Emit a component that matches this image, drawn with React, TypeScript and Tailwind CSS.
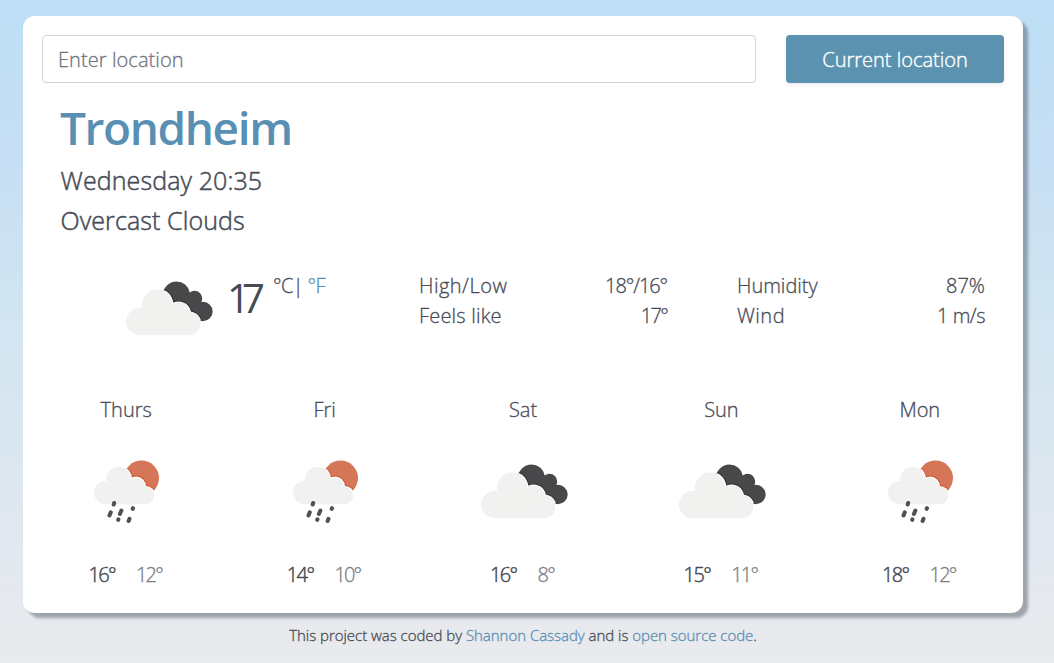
import React from "react";

function Clouds() {
  return (
    <svg viewBox="0 0 100 100" className="block size-[100px]">
      <defs>
        <clipPath id="rear-cloud">
          <circle cx="56.500" cy="38" r="13.500" />
          <circle cx="74.500" cy="41.500" r="7.700" />
          <circle cx="83" cy="54.500" r="9.700" />
          <path d="M50 38L69 35L78 42L84 62L60 60Z" />
        </clipPath>
      </defs>
      <g clipPath="url(#rear-cloud)">
        <path fill="#48484a" d="M30 20H100V75H30Z" />
        <g fill="#2f2f31">
          <circle cx="37" cy="48" r="17.500" />
          <circle cx="58.500" cy="57" r="13.600" />
          <circle cx="69" cy="67" r="13.600" />
        </g>
        <g fill="#fff">
          <circle cx="37" cy="48" r="16.500" />
          <circle cx="58.500" cy="57" r="12.600" />
          <circle cx="69" cy="67" r="12.600" />
        </g>
      </g>
      <g fill="#f1f1f0">
        <circle cx="37" cy="47.500" r="15" />
        <circle cx="19.500" cy="64.500" r="13.500" />
        <circle cx="58.500" cy="57" r="11.500" />
        <circle cx="69" cy="66.500" r="11.500" />
        <path d="M19 52L37 40L59 50L69 67V78H19Z" />
      </g>
    </svg>
  );
}

function SunRain() {
  return (
    <svg viewBox="0 0 100 100" className="block size-[100px]">
      <defs>
        <clipPath id="sun-disc"><circle cx="65.500" cy="42" r="17.500" /></clipPath>
      </defs>
      <g clipPath="url(#sun-disc)">
        <path fill="#d47657" d="M40 20H90V65H40Z" />
        <g fill="#cf5a38">
          <circle cx="42" cy="43" r="14.800" />
          <circle cx="60" cy="50.500" r="11" />
          <circle cx="69.500" cy="60.500" r="11.500" />
        </g>
        <g fill="#fff">
          <circle cx="42" cy="43" r="13.900" />
          <circle cx="60" cy="50.500" r="10" />
          <circle cx="69.500" cy="60.500" r="10.500" />
        </g>
      </g>
      <g fill="#f1f1f1">
        <circle cx="42.500" cy="43" r="12.300" />
        <circle cx="29.500" cy="56.500" r="11.500" />
        <circle cx="60" cy="50.500" r="8.500" />
        <circle cx="69.500" cy="59.500" r="8.700" />
        <path d="M29 46L42 38L60 44L69.500 59V68.200H29Z" />
      </g>
      <g stroke="#505052" strokeWidth="4" strokeLinecap="round">
        <path d="M38.200 67L37.700 68.500M34.800 76.300L33.500 79.500M45.400 74.500L43.900 78M57 72.200L56.700 72.800M42.400 83.400L42.200 83.800M53.500 82.800L52.600 85" />
      </g>
    </svg>
  );
}

const days = [
  { name: "Thurs", high: "16°", low: "12°", rain: true },
  { name: "Fri", high: "14°", low: "10°", rain: true },
  { name: "Sat", high: "16°", low: "8°", rain: false },
  { name: "Sun", high: "15°", low: "11°", rain: false },
  { name: "Mon", high: "18°", low: "12°", rain: true },
];

export default function App() {
  return (
    <div className="h-[663px] overflow-hidden bg-[linear-gradient(to_bottom,#bddff6_0%,#c7dff4_25%,#cfe4f1_43%,#d9e7f0_65%,#e3e8f0_84%,#e9eaec_100%)] px-[23px] pt-4 font-['Open_Sans','Noto_Sans',sans-serif] text-xl font-light leading-[30px] text-[#464b56] [-webkit-text-stroke:0.3px]">
      <main className="h-[597px] w-[1000px] rounded-[12px] bg-white pt-[19px] shadow-[5px_5px_3px_rgba(60,70,80,0.42)]">
        <form className="flex gap-[30px] pl-[19px]" onSubmit={(e) => e.preventDefault()}>
          <input className="h-12 w-[714px] rounded border border-[#ced4da] px-[15px] tracking-[0.07px] outline-none placeholder:text-[#6c757d]" placeholder="Enter location" />
          <button className="h-12 w-[218px] rounded bg-[#5a92af] pt-px text-white shadow-[0_2px_4px_rgba(0,0,0,0.08)] [-webkit-text-stroke:0.4px]">Current location</button>
        </form>
        <h1 className="mt-[16px] h-[56px] pl-[37px] text-[46px] font-semibold leading-[56px] tracking-[-1.4px] text-[#5a8fb4] [-webkit-text-stroke:0]">Trondheim</h1>
        <div className="mt-[5px] pl-[37.5px] text-[25px] leading-10 tracking-[0.1px] [-webkit-text-stroke:0.5px]">
          <p>Wednesday 20:35</p>
          <p>Overcast Clouds</p>
        </div>
        <section className="mt-[15px] flex h-[100px] pt-4">
          <div className="-mt-[14px] ml-[97px] w-[100px]"><Clouds /></div>
          <div className="ml-[7px] flex w-[192px]">
            <span className="mt-[3px] w-[46px] text-[40px] font-normal leading-[48px] tracking-[-6px] [-webkit-text-stroke:0]"><span className="tracking-[-8px]">1</span>7</span>
            <span className="tracking-[-0.6px]">°C| <span className="text-[#5a8fb4]">°F</span></span>
          </div>
          <dl className="grid h-[60px] w-[248px] grid-cols-[auto_auto] justify-between">
            <dt className="tracking-[0.5px]">High/Low</dt><dd className="text-right tracking-[-1.1px]">18°/16°</dd>
            <dt className="tracking-[0.2px]">Feels like</dt><dd className="text-right tracking-[-1.7px]">17°</dd>
          </dl>
          <dl className="ml-[70px] grid h-[60px] w-[248px] grid-cols-[auto_auto] justify-between">
            <dt>Humidity</dt><dd className="text-right">87%</dd>
            <dt className="tracking-[0.5px]">Wind</dt><dd className="text-right tracking-[-0.5px]">1 m/s</dd>
          </dl>
        </section>
        <section className="mx-1 mt-[40px] grid grid-cols-5">
          {days.map((d) => (
            <div key={d.name} className="flex flex-col items-center">
              <span>{d.name}</span>
              <div className="mt-[15px] h-[120px]">
                {d.rain ? <div className="-mt-[4px]"><SunRain /></div> : <div className="pl-[4px]"><Clouds /></div>}
              </div>
              <p className="flex gap-[21px] pr-[2px] tracking-[-1.8px]"><span className="tracking-[-1.6px] [-webkit-text-stroke:0.45px]">{d.high}</span><span className="text-[#7a7e85]">{d.low}</span></p>
            </div>
          ))}
        </section>
      </main>
      <footer className="mt-[10px] pr-[8px] text-center text-[15px] leading-6 tracking-[-0.03px]">
        This project was coded by <a className="text-[#5a8fb4]">Shannon Cassady</a> and is <a className="text-[#5a8fb4]">open source code</a>.
      </footer>
    </div>
  );
}
